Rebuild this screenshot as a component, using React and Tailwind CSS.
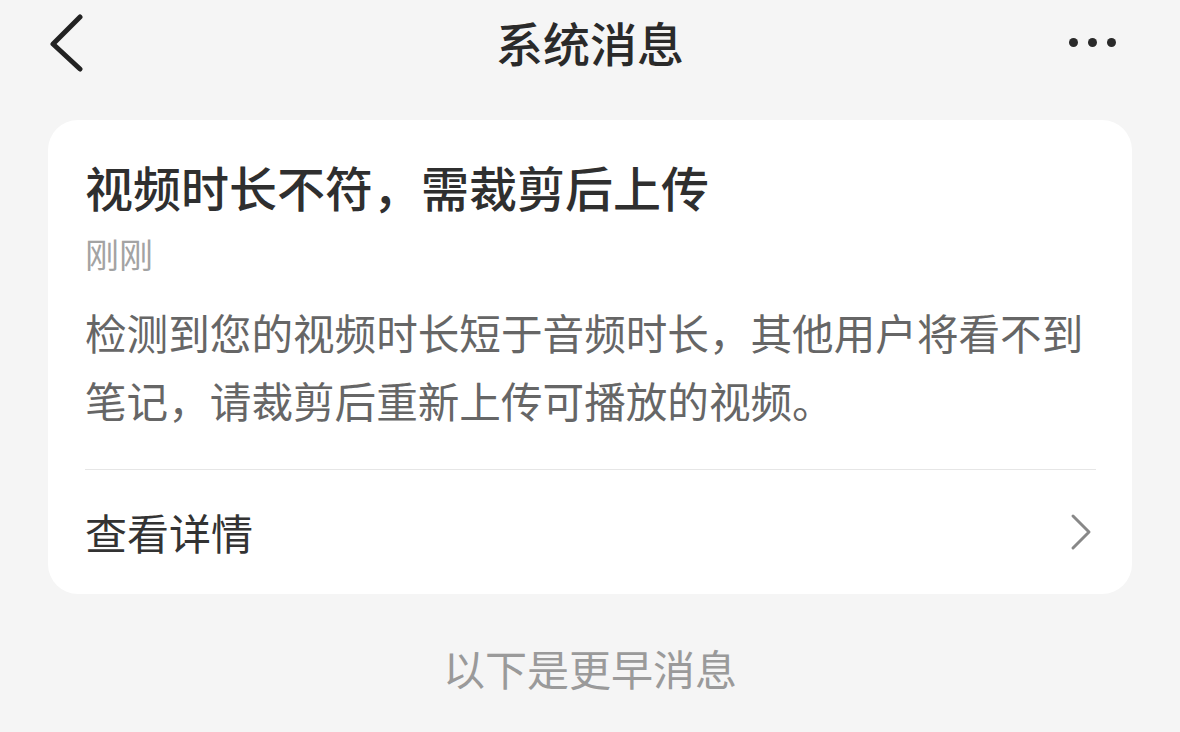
export default function App() {
  return (
    <div
      className="h-[732px] w-full overflow-hidden bg-[#f5f5f5]"
      style={{ fontFamily: '"Noto Sans CJK SC", "Noto Sans", sans-serif' }}
    >
      {/* Top bar */}
      <header className="grid h-[84px] grid-cols-[1fr_auto_1fr] items-center">
        <div className="flex items-center pl-[46px]">
          <svg width="40" height="60" viewBox="0 0 40 60" fill="none">
            <path
              d="M34 5 L7 32 L34 57"
              stroke="#222"
              strokeWidth="5"
              strokeLinecap="round"
              strokeLinejoin="round"
            />
          </svg>
        </div>
        <h1 className="text-[47px] font-medium leading-[56px] text-[#2a2a2a]">系统消息</h1>
        <div className="flex items-center justify-end gap-[10px] pr-[64px]">
          <span className="h-[9px] w-[9px] rounded-full bg-[#2a2a2a]" />
          <span className="h-[9px] w-[9px] rounded-full bg-[#2a2a2a]" />
          <span className="h-[9px] w-[9px] rounded-full bg-[#2a2a2a]" />
        </div>
      </header>

      {/* Message card */}
      <div className="mx-[48px] mt-[36px] rounded-[30px] bg-white pl-[37px] pr-[36px] pt-[38px]">
        <h2 className="text-[48px] font-medium leading-[56px] text-[#2f2f2f]">
          视频时长不符，需裁剪后上传
        </h2>
        <p className="mt-[20px] text-[34px] leading-[40px] text-[#a3a3a3]">刚刚</p>
        <p className="mt-[24px] text-[41.6px] leading-[68px] text-[#666]">
          检测到您的视频时长短于音频时长，其他用户将看不到笔记，请裁剪后重新上传可播放的视频。
        </p>
        <div className="mt-[35px] h-px bg-[#e6e6e6]" />
        <div className="flex h-[124px] items-center justify-between">
          <span className="text-[42px] leading-[50px] text-[#333]">查看详情</span>
          <svg width="24" height="40" viewBox="0 0 24 40" fill="none" className="mr-[2px]">
            <path
              d="M3 4 L19 20 L3 36"
              stroke="#888"
              strokeWidth="3"
              strokeLinecap="round"
              strokeLinejoin="round"
            />
          </svg>
        </div>
      </div>

      <p className="mt-[49px] text-center text-[42px] leading-[50px] text-[#9a9a9a]">以下是更早消息</p>
    </div>
  )
}
